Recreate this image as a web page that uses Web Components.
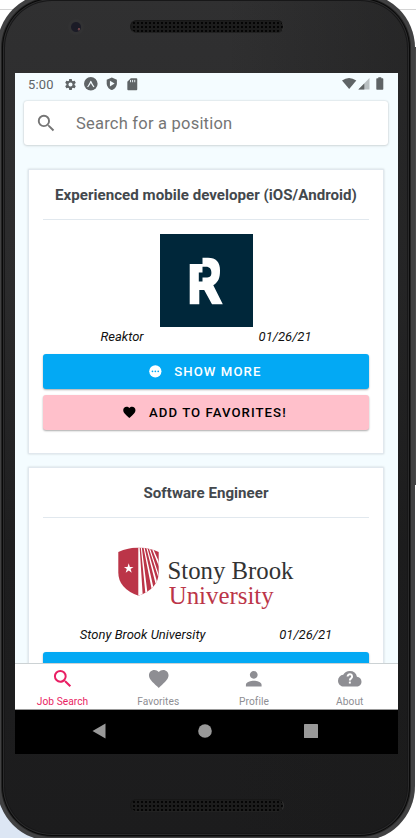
<!DOCTYPE html>
<html lang="en">
<head>
<meta charset="utf-8">
<title>Job Search</title>
<style>
html, body { margin: 0; height: 100%; overflow: hidden; }
body { font-family: Roboto, "Noto Sans", sans-serif; background: linear-gradient(#fff 0 9px, #d4d4d4 9px 10px, #fff 10px 500px, transparent 500px), linear-gradient(90deg, #dce6f4 50%, #fff 50%); }
</style>
</head>
<body>
<phone-frame>
  <status-bar></status-bar>
  <search-field placeholder="Search for a position"></search-field>
  <job-list>
    <job-card heading="Experienced mobile developer (iOS/Android)" company="Reaktor" date="01/26/21"><reaktor-logo></reaktor-logo><action-button slot="actions" kind="more">SHOW MORE</action-button><action-button slot="actions" kind="favorite">ADD TO FAVORITES!</action-button></job-card>
    <job-card heading="Software Engineer" company="Stony Brook University" date="01/26/21"><stony-logo></stony-logo><action-button slot="actions" kind="more"></action-button></job-card>
  </job-list>
  <tab-bar>
    <tab-item active icon="search" label="Job Search"></tab-item>
    <tab-item icon="heart" label="Favorites"></tab-item>
    <tab-item icon="person" label="Profile"></tab-item>
    <tab-item icon="cloud" label="About"></tab-item>
  </tab-bar>
  <system-nav></system-nav>
</phone-frame>
<script>
const define = (name, render) => customElements.define(name, class extends HTMLElement {
  connectedCallback() {
    if (this.shadowRoot) return;
    this.attachShadow({ mode: 'open' }).innerHTML = render(k => this.getAttribute(k));
  }
});

const glyphs = {
  search: '<path d="M15.5 14h-.79l-.28-.27A6.47 6.47 0 0 0 16 9.5 6.5 6.5 0 1 0 9.5 16c1.61 0 3.09-.59 4.23-1.57l.27.28v.79l5 4.99L20.49 19l-4.99-5zm-6 0C7.01 14 5 11.99 5 9.5S7.01 5 9.5 5 14 7.01 14 9.5 11.99 14 9.5 14z"/>',
  heart: '<path d="M12 21.35l-1.45-1.32C5.4 15.36 2 12.28 2 8.5 2 5.42 4.42 3 7.5 3c1.74 0 3.41.81 4.5 2.09C13.09 3.81 14.76 3 16.5 3 19.58 3 22 5.42 22 8.5c0 3.78-3.4 6.86-8.55 11.54L12 21.35z"/>',
  person: '<path d="M12 12c2.21 0 4-1.79 4-4s-1.79-4-4-4-4 1.79-4 4 1.79 4 4 4zm0 2c-2.67 0-8 1.34-8 4v2h16v-2c0-2.66-5.33-4-8-4z"/>',
  cloud: '<path d="M19.35 10.04A7.49 7.49 0 0 0 12 4C9.11 4 6.6 5.64 5.35 8.04A5.994 5.994 0 0 0 0 14c0 3.31 2.69 6 6 6h13c2.76 0 5-2.24 5-5 0-2.64-2.05-4.78-4.65-4.96z"/><path d="M9.8 9.700a2.300 2.300 0 1 1 3.700 1.800c-.9.7-1.400 1-1.400 2.200" fill="none" stroke="#fff" stroke-width="2"/><rect x="11.100" y="14.900" width="2" height="2" fill="#fff"/>',
  dots: '<circle cx="12" cy="12" r="10"/><g fill="#03a9f4"><circle cx="7.3" cy="12" r="1.4"/><circle cx="12" cy="12" r="1.4"/><circle cx="16.7" cy="12" r="1.4"/></g>',
  gear: '<path d="M19.43 12.98c.04-.32.07-.64.07-.98s-.03-.66-.07-.98l2.11-1.65c.19-.15.24-.42.12-.64l-2-3.46c-.12-.22-.39-.3-.61-.22l-2.49 1c-.52-.4-1.08-.73-1.69-.98l-.38-2.65A.488.488 0 0 0 14 2h-4c-.25 0-.46.18-.49.42l-.38 2.65c-.61.25-1.17.59-1.69.98l-2.49-1c-.23-.09-.49 0-.61.22l-2 3.46c-.13.22-.07.49.12.64l2.11 1.65c-.04.32-.07.65-.07.98s.03.66.07.98l-2.11 1.65c-.19.15-.24.42-.12.64l2 3.46c.12.22.39.3.61.22l2.49-1c.52.4 1.08.73 1.69.98l.38 2.65c.03.24.24.42.49.42h4c.25 0 .46-.18.49-.42l.38-2.65c.61-.25 1.17-.59 1.69-.98l2.49 1c.23.09.49 0 .61-.22l2-3.46c.12-.22.07-.49-.12-.64l-2.11-1.65zM12 15.8a3.8 3.8 0 1 1 0-7.6 3.8 3.8 0 0 1 0 7.6z"/>',
  expo: '<circle cx="12" cy="12" r="12"/><path d="M5.5 17.3C8 13.9 9.5 10.5 11 7.3q1-1.6 2 0c1.5 3.2 3 6.6 5.5 10l-1.6.7c-2.2-1.6-3.3-4.7-4.900-7.3-1.6 2.6-2.7 5.7-4.9 7.3z" fill="#f4fcff"/>',
  shield: '<path d="M12 1L3 5v6c0 5.55 3.84 10.74 9 12 5.16-1.26 9-6.45 9-12V5z"/><path d="M8.7 6.5v10.2l8.3-5.1z" fill="#f4fcff"/>',
  sd: '<path d="M19.5 2H10L4 8v13q0 1.5 1.5 1.5h14q1.5 0 1.5-1.5V3.5Q21 2 19.5 2z"/><path d="M9.5 5v4M13 5v4M16.7 5v4" stroke="#f4fcff" stroke-width="1.5"/>'
};
const icon = (name, size, style = '') =>
  `<svg width="${size}" height="${size}" viewBox="0 0 24 24" fill="currentColor" style="flex:none;${style}">${glyphs[name]}</svg>`;

define('speaker-grille', () => `<style>
:host { display:block; box-sizing:border-box; width:154px; height:13px; border-radius:7px; border:1px solid #171717; border-right-color:#343434; border-bottom-color:#222;
  background: radial-gradient(circle, #050505 1px, transparent 1.3px) 1px 0/4px 4px, #1c1c1c; }
</style>`);

define('phone-frame', () => `<style>
:host { display:flex; flex-direction:column; position:relative; box-sizing:border-box; width:418px; height:848px; margin:-7px 0 0 -3px; padding:80px 17px 87px 18px; border-radius:55px;
  background:linear-gradient(90deg,transparent 55%,#19191966),linear-gradient(#303031,#2b2b2c 35%,#1e1e1f 65%,#1c1c1d);
  box-shadow: inset 0 0 0 4px #414142, inset 0 0 0 5px #242424, inset 0 0 0 6px #090909, inset 0 0 0 7px #2a2a2b, inset 0 0 0 8px #171718; }
.screen { display:flex; flex-direction:column; flex:1; min-height:0; overflow:hidden; background:#f4fcff; }
.top, .bottom, .cam, .key { position:absolute; }
.top { left:133px; top:27px; } .bottom { left:133px; top:806px; }
.cam { left:71px; top:26px; width:16px; height:16px; border-radius:50%; background:radial-gradient(circle at 68% 64%, #6b4146 0 1px, transparent 1.5px),radial-gradient(circle,#1b1b26 0 4.5px,#323233 5.5px); }
.key { left:418px; top:54px; width:1px; height:438px; background:#4a4a4a; }
</style><span class="cam"></span><speaker-grille class="top"></speaker-grille><div class="screen"><slot></slot></div><speaker-grille class="bottom"></speaker-grille><span class="key"></span>`);

define('status-bar', () => `<style>
:host { display:flex; align-items:center; height:22px; padding:0 13px; color:#5f6466; font-size:12.9px; letter-spacing:.2px; flex:none; }
.time { width:36px; }
.right { margin-left:auto; display:flex; align-items:center; }
</style><span class="time">5:00</span>${icon('gear', 13)}${icon('expo', 13.6, 'margin-left:7px')}${icon('shield', 13.6, 'margin-left:7px')}${icon('sd', 14, 'margin-left:7px')}
<span class="right"><svg width="43" height="14" viewBox="0 0 43 14" fill="#5f6466"><path d="M0 3.5Q7 -1.5 14.3 3.5L7.2 12z"/><path d="M16.3 12.5L27.5 1v11.5z" opacity=".4"/><path d="M16.3 12.5l6-6.1v6.1z"/><path d="M34.3 2q0-.7.7-.7h1.3V.3h3v1h1.3q.7 0 .7.7v10q0 .7-.7.7H35q-.7 0-.7-.7z"/></svg></span>`);

define('search-field', k => `<style>
:host { display:flex; align-items:center; flex:none; height:44px; margin:6px 10px 0 9px; padding-left:11.5px; border-radius:3px; background:#fff; color:#757575; box-shadow:0 0 2px #0003,0 1px 3px #0000001a; font-size:16.5px; }
svg { margin-left:-.5px; }
span { margin-left:18.5px; letter-spacing:.22px; }
</style>${icon('search', 22.5)}<span>${k('placeholder')}</span>`);

define('job-list', () => `<style>
:host { display:flex; flex-direction:column; flex:1; min-height:0; overflow:hidden; gap:13px; padding:24px 14px 0 13px; }
</style><slot></slot>`);

define('action-button', k => `<style>
:host { display:flex; align-items:center; justify-content:center; gap:12px; box-sizing:border-box; height:34.5px; padding:1px 3px 0 0; border-radius:3px; flex:none; font-size:13.2px; font-weight:500; letter-spacing:1.05px; box-shadow:0 1px 2px #0005; }
:host([kind=more]) { background:#03a9f4; color:#fff; }
:host([kind=favorite]) { background:#ffc0cb; color:#000; margin-top:6.5px; }
</style>${icon(k('kind') === 'more' ? 'dots' : 'heart', 14.7)}<span><slot></slot></span>`);

define('job-card', k => `<style>
:host { display:flex; flex-direction:column; box-sizing:border-box; flex:none; height:285px; border:1px solid #e1e8ee; padding:14px 14px 0; background:#fff; box-shadow:0 0 2px #0000002a; }
h2 { margin:0; height:36px; line-height:23px; font-size:15.1px; font-weight:700; color:#43484d; text-align:center; border-bottom:1px solid #e1e8ee; box-sizing:border-box; white-space:nowrap; letter-spacing:.02px; }
.picture { height:93px; margin-top:13.5px; display:flex; justify-content:center; align-items:center; }
.meta { display:flex; justify-content:space-around; font-size:13px; line-height:20px; height:20px; font-style:italic; color:#111; margin-bottom:7.5px; }
</style><h2>${k('heading')}</h2><div class="picture"><slot></slot></div>
<div class="meta"><span>${k('company')}</span><span>${k('date')}</span></div>
<slot name="actions"></slot>`);

define('reaktor-logo', () => `<style>:host { display:block; height:93px; } svg { display:block; }</style>
<svg width="93" height="93" viewBox="0 0 93 93"><rect width="93" height="93" fill="#00273a"/><path fill="#fff" d="M29.7 30H42.5V23.8H48C56 23.8 60 28.3 60 36.5 60 44 58.5 48 53.3 51.2L62.8 70.3H52L44.2 56H39.3V70.3H29.7z"/><path fill="#00273a" d="M42.5 32.8H46C49.6 32.8 51.4 35 51.4 38.8S49.6 43.5 46 43.5H42.5V47.5H38.8V38.5H42.5z"/></svg>`);

define('stony-logo', () => `<style>:host { display:block; height:93px; } svg { display:block; font-family:"Liberation Serif",serif; }</style>
<svg width="184" height="93" viewBox="114 531.5 184 93"><defs><clipPath id="s"><path d="M118.3 551.5Q128 547 138.5 547T158.7 551.5V572Q158.7 588 138.5 595.3 118.3 588 118.3 572z"/></clipPath></defs>
<g clip-path="url(#s)"><path fill="#bb3548" d="M118 546h41v50h-41z"/><g fill="#fff"><path d="M138.3 546h1.3l3.2 50h-4.5zM140.7 546h1l6.2 50h-2.2zM143.3 546h1l10 45h-2.2zM146 546h1l10.500 37h-2zM148.3 546h1.1l10.3 31-1 1zM151 546h1.1l8 18v5z"/></g></g>
<path fill="#fff" d="M128.7 562.8l1.2 3.6h3.6l-2.9 2.2 1.1 3.6-3-2.2-3 2.2 1.1-3.6-2.9-2.2h3.6z"/>
<text x="167.5" y="578.7" font-size="25" fill="#333" textLength="126" lengthAdjust="spacingAndGlyphs">Stony Brook</text>
<text x="168.7" y="603.7" font-size="25" fill="#bb3548" textLength="105" lengthAdjust="spacingAndGlyphs">University</text></svg>`);

define('tab-bar', () => `<style>
:host { display:grid; grid-template-columns:repeat(4,1fr); box-sizing:border-box; height:47px; flex:none; margin-top:-.5px; background:#fff; border-top:1px solid #ccd2d4; border-bottom:1px solid #999; }
</style><slot></slot>`);

define('tab-item', k => `<style>
:host { display:flex; flex-direction:column; align-items:center; color:#8e8e93; padding-top:2.5px; margin-left:-.7px; }
:host([active]) { color:#e91e63; }
span { font-size:10.2px; line-height:14px; margin-top:4.5px; letter-spacing:.05px; white-space:nowrap; }
</style>${icon(k('icon'), 23.5)}<span>${k('label')}</span>`);

define('system-nav', () => `<style>
:host { display:grid; grid-template-columns:repeat(3,1fr); align-items:center; justify-items:center; box-sizing:border-box; padding:0 33.5px 1.5px 30.5px; height:44px; flex:none; background:#000; }
svg { display:block; }
</style><svg width="14" height="16" fill="#999"><path d="M.5 8L13.5.5v15z"/></svg><svg width="14" height="14" fill="#999"><circle cx="7" cy="7" r="6.8"/></svg><svg width="14" height="14" fill="#999"><rect width="14" height="14" rx=".6"/></svg>`);
</script>
</body>
</html>
